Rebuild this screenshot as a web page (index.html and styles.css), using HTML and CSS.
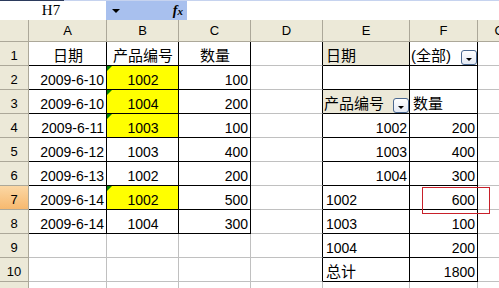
FILE: index.html
```html
<!DOCTYPE html>
<html>
<head>
<meta charset="utf-8">
<link rel="stylesheet" href="styles.css">
</head>
<body>
<div class="app">
  <div class="strip"></div>
  <div class="fbar">
    <div class="namebox">H7</div>
    <div class="fxarea"><span class="arrow"></span><span class="fx">f<span class="sx">x</span></span></div>
    <div class="formula"></div>
  </div>
  <div class="sheet">
    <!-- header row -->
    <div class="c h corner"></div>
    <div class="c h">A</div>
    <div class="c h">B</div>
    <div class="c h">C</div>
    <div class="c h">D</div>
    <div class="c h">E</div>
    <div class="c h">F</div>
    <div class="c h">G</div>
    <!-- row 1 -->
    <div class="c rh">1</div>
    <div class="c k ctr zh">日期</div>
    <div class="c k ctr zh">产品编号</div>
    <div class="c k ctr zh">数量</div>
    <div class="c kr"></div>
    <div class="c k fld zh"><span>日期</span></div>
    <div class="c k nopad zh"><span class="t">(全部)</span><span class="dd"></span></div>
    <div class="c"></div>
    <!-- row 2 -->
    <div class="c rh">2</div>
    <div class="c k r">2009-6-10</div>
    <div class="c k ctr y tri">1002</div>
    <div class="c k r">100</div>
    <div class="c kr"></div>
    <div class="c k"></div>
    <div class="c k"></div>
    <div class="c"></div>
    <!-- row 3 -->
    <div class="c rh">3</div>
    <div class="c k r">2009-6-10</div>
    <div class="c k ctr y tri">1004</div>
    <div class="c k r">200</div>
    <div class="c kr"></div>
    <div class="c k fld nopad zh"><span class="t">产品编号</span><span class="dd dd-e"></span></div>
    <div class="c k zh">数量</div>
    <div class="c"></div>
    <!-- row 4 -->
    <div class="c rh">4</div>
    <div class="c k r">2009-6-11</div>
    <div class="c k ctr y tri">1003</div>
    <div class="c k r">100</div>
    <div class="c kr"></div>
    <div class="c k r">1002</div>
    <div class="c k r">200</div>
    <div class="c"></div>
    <!-- row 5 -->
    <div class="c rh">5</div>
    <div class="c k r">2009-6-12</div>
    <div class="c k ctr">1003</div>
    <div class="c k r">400</div>
    <div class="c kr"></div>
    <div class="c k r">1003</div>
    <div class="c k r">400</div>
    <div class="c"></div>
    <!-- row 6 -->
    <div class="c rh">6</div>
    <div class="c k r">2009-6-13</div>
    <div class="c k ctr">1002</div>
    <div class="c k r">200</div>
    <div class="c kr"></div>
    <div class="c k r">1004</div>
    <div class="c k r">300</div>
    <div class="c"></div>
    <!-- row 7 -->
    <div class="c rh sel">7</div>
    <div class="c k r">2009-6-14</div>
    <div class="c k ctr y tri">1002</div>
    <div class="c k r">500</div>
    <div class="c kr"></div>
    <div class="c k l">1002</div>
    <div class="c k r mark">600</div>
    <div class="c"></div>
    <!-- row 8 -->
    <div class="c rh">8</div>
    <div class="c k r">2009-6-14</div>
    <div class="c k ctr">1004</div>
    <div class="c k r">300</div>
    <div class="c kr"></div>
    <div class="c k l">1003</div>
    <div class="c k r">100</div>
    <div class="c"></div>
    <!-- row 9 -->
    <div class="c rh">9</div>
    <div class="c"></div>
    <div class="c"></div>
    <div class="c"></div>
    <div class="c kr"></div>
    <div class="c k l">1004</div>
    <div class="c k r">200</div>
    <div class="c"></div>
    <!-- row 10 -->
    <div class="c rh">10</div>
    <div class="c"></div>
    <div class="c"></div>
    <div class="c"></div>
    <div class="c kr"></div>
    <div class="c k l zh">总计</div>
    <div class="c k r">1800</div>
    <div class="c"></div>
    <!-- row 11 (partly visible) -->
    <div class="c rh"></div>
    <div class="c"></div>
    <div class="c"></div>
    <div class="c"></div>
    <div class="c"></div>
    <div class="c"></div>
    <div class="c"></div>
    <div class="c"></div>
  </div>
</div>
</body>
</html>
```

FILE: styles.css
```css
* { box-sizing: border-box; }
html, body { margin: 0; padding: 0; background: #fff; }
body { width: 499px; height: 288px; overflow: hidden; }
.app {
  width: 499px;
  height: 288px;
  overflow: hidden;
  font-family: "Liberation Sans", "Noto Sans CJK SC", sans-serif;
  font-size: 14px;
  color: #000;
}
.strip {
  height: 1px;
  background: linear-gradient(to right, #2b3a5c 0, #2b3a5c 64px, #c6d3ef 64px, #c6d3ef 100%);
}
.fbar {
  display: flex;
  height: 19px;
}
.namebox {
  width: 106px;
  background: #fff;
  font-family: "Liberation Serif", serif;
  font-size: 15px;
  line-height: 19px;
  text-align: center;
  padding-right: 4px;
}
.fxarea {
  width: 81px;
  background: #a8c0ee;
  display: flex;
  align-items: center;
  padding-left: 6px;
  padding-right: 4px;
}
.arrow {
  width: 0;
  height: 0;
  border-left: 4px solid transparent;
  border-right: 4px solid transparent;
  border-top: 4px solid #000;
  margin-top: 1px;
}
.fx {
  margin-left: auto;
  font-family: "Liberation Serif", serif;
  font-style: italic;
  font-weight: bold;
  font-size: 14px;
  line-height: 14px;
}
.fx .sx { font-size: 11px; }
.formula { flex: 1; background: #fff; }

.sheet {
  display: grid;
  grid-template-columns: 29px 78px 72px 72px 72px 87px 68px 44px;
  grid-template-rows: 22px repeat(11, 24px);
  width: 522px;
}
.c {
  position: relative;
  display: flex;
  align-items: flex-end;
  border-right: 1px solid #c0c0c0;
  border-bottom: 1px solid #c0c0c0;
  padding: 0 2px 1px 3px;
  line-height: 16px;
  white-space: nowrap;
  overflow: hidden;
}
.h, .rh {
  background: #ece9d8;
  border-right-color: #aca899;
  border-bottom-color: #aca899;
  justify-content: center;
  font-size: 13px;
  padding: 0 0 2px 0;
}
.rh { padding-bottom: 1px; }
.sel { background: linear-gradient(#fbd7a4, #f7b96f); }
.k { border-right-color: #000; border-bottom-color: #000; }
.kr { border-right-color: #000; }
.ctr { justify-content: center; }
.r { justify-content: flex-end; }
.l { justify-content: flex-start; }
.zh { font-size: 15px; }
.y { background: #ffff00; }
.tri::before {
  content: "";
  position: absolute;
  left: 0;
  top: 0;
  border-top: 5px solid #008000;
  border-right: 5px solid transparent;
}
.fld { background: #ebe8d8; }
.nopad { padding: 0 0 0 1px; }
.nopad .t { margin-bottom: 1px; }
.dd {
  margin-left: auto;
  width: 16px;
  height: 15px;
  border: 1px solid #4a6890;
  border-radius: 3px;
  background: linear-gradient(#ffffff, #e3e9f4);
  display: flex;
  align-items: center;
  justify-content: center;
  flex: none;
}
.dd::after {
  content: "";
  width: 0;
  height: 0;
  margin-top: 3px;
  border-left: 3px solid transparent;
  border-right: 3px solid transparent;
  border-top: 3px solid #000;
}
.dd-e { margin-right: 0; }
.mark::after {
  content: "";
  position: absolute;
  left: 12px;
  top: 1px;
  width: 66px;
  height: 25px;
  border: 1px solid #c8202a;
}
.sheet .mark { overflow: visible; z-index: 2; }
```
